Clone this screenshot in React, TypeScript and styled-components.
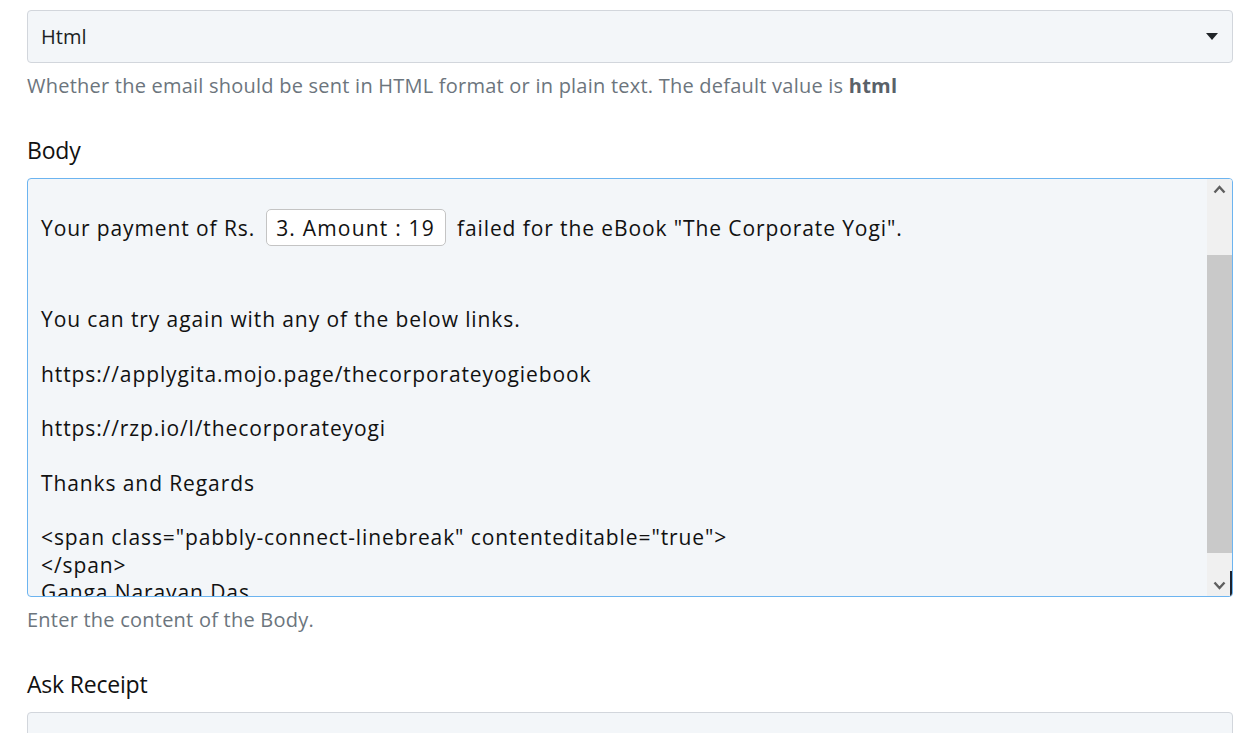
import React from "react";
import styled, { createGlobalStyle } from "styled-components";

const GlobalStyle = createGlobalStyle`
  html, body {
    margin: 0;
    padding: 0;
    background: #ffffff;
  }
  body {
    font-family: "Open Sans", Lato, sans-serif;
  }
`;

const Page = styled.div`
  padding: 10px 27px 0 27px;
  height: 733px;
  box-sizing: border-box;
  overflow: hidden;
`;

const Field = styled.div`
  display: flex;
  flex-direction: column;
  margin-bottom: 37px;
`;

const Label = styled.div`
  font-size: 23px;
  color: #111111;
  margin-bottom: 14px;
  line-height: 28px;
  letter-spacing: -0.2px;
`;

const Select = styled.div`
  height: 53px;
  box-sizing: border-box;
  border: 1px solid #d2d6dc;
  border-radius: 4px;
  background: #f3f6f9;
  display: flex;
  align-items: center;
  justify-content: space-between;
  padding: 0 14px 0 13px;
  font-size: 20px;
  color: #1c1f24;
`;

const Caret = styled.span`
  width: 0;
  height: 0;
  border-left: 6px solid transparent;
  border-right: 6px solid transparent;
  border-top: 7px solid #212529;
`;

const Help = styled.div`
  font-size: 20px;
  letter-spacing: 0.23px;
  color: #6c757d;
  margin-top: 10px;
  line-height: 26px;

  b {
    color: #5a6169;
    font-weight: 700;
  }
`;

const Editor = styled.div`
  height: 419px;
  box-sizing: border-box;
  border: 1px solid #6cb4f0;
  border-radius: 4px;
  background: #f3f6f9;
  display: flex;
  overflow: hidden;
  position: relative;
`;

const Content = styled.div`
  flex: 1;
  padding: 30px 14px 0 13px;
  overflow: hidden;
  font-family: "Open Sans", sans-serif;
  font-size: 21px;
  letter-spacing: 0.9px;
  color: #111111;
`;

const FirstRow = styled.div`
  display: flex;
  align-items: center;
  gap: 11px;
  height: 37px;
  margin-bottom: 60px;
`;

// inline token pill inside the editor text
const Chip = styled.span`
  height: 37px;
  box-sizing: border-box;
  display: inline-flex;
  align-items: center;
  padding: 0 10px 0 9px;
  background: #ffffff;
  border: 1px solid #c4c4c4;
  border-radius: 5px;
  letter-spacing: 1.2px;
`;

const Line = styled.div`
  line-height: 27.3px;
  min-height: 27.3px;
  white-space: pre;
`;

const Scrollbar = styled.div`
  width: 25px;
  background: #f0f0f0;
  display: flex;
  flex-direction: column;
`;

const ArrowBox = styled.div<{ $h: number }>`
  height: ${(p) => p.$h}px;
  display: flex;
  justify-content: center;
  align-items: ${(p) => (p.$h > 50 ? "flex-start" : "flex-end")};
  padding: 6px 0;
  box-sizing: border-box;
`;

const Thumb = styled.div`
  flex: 1;
  background: #c9c9c9;
`;

const Cursor = styled.div`
  position: absolute;
  right: 0;
  bottom: 0;
  width: 2px;
  height: 25px;
  background: #1c2330;
`;

const Chevron = ({ up }: { up?: boolean }) => (
  <svg width="13" height="9" viewBox="0 0 13 9">
    <path
      d={up ? "M1.5 7.5 L6.5 2 L11.5 7.5" : "M1.5 1.5 L6.5 7 L11.5 1.5"}
      fill="none"
      stroke="#5f5f5f"
      strokeWidth="2.4"
    />
  </svg>
);

const EmptyBox = styled.div`
  height: 60px;
  border: 1px solid #d2d6dc;
  border-radius: 4px;
  background: #f3f6f9;
`;

export default function App() {
  return (
    <Page>
      <GlobalStyle />
      <Field>
        <Select>
          <span>Html</span>
          <Caret />
        </Select>
        <Help>
          Whether the email should be sent in HTML format or in plain text. The
          default value is <b>html</b>
        </Help>
      </Field>

      <Field>
        <Label>Body</Label>
        <Editor>
          <Content>
            <FirstRow>
              <span>Your payment of Rs.</span>
              <Chip>3. Amount : 19</Chip>
              <span>failed for the eBook "The Corporate Yogi".</span>
            </FirstRow>
            <Line>You can try again with any of the below links.</Line>
            <Line />
            <Line>https://applygita.mojo.page/thecorporateyogiebook</Line>
            <Line />
            <Line>https://rzp.io/l/thecorporateyogi</Line>
            <Line />
            <Line>Thanks and Regards</Line>
            <Line />
            <Line>{'<span class="pabbly-connect-linebreak" contenteditable="true">'}</Line>
            <Line>{"</span>"}</Line>
            <Line>Ganga Narayan Das</Line>
          </Content>
          <Scrollbar>
            <ArrowBox $h={76}>
              <Chevron up />
            </ArrowBox>
            <Thumb />
            <ArrowBox $h={43}>
              <Chevron />
            </ArrowBox>
          </Scrollbar>
          <Cursor />
        </Editor>
        <Help>Enter the content of the Body.</Help>
      </Field>

      <Field>
        <Label>Ask Receipt</Label>
        <EmptyBox />
      </Field>
    </Page>
  );
}
